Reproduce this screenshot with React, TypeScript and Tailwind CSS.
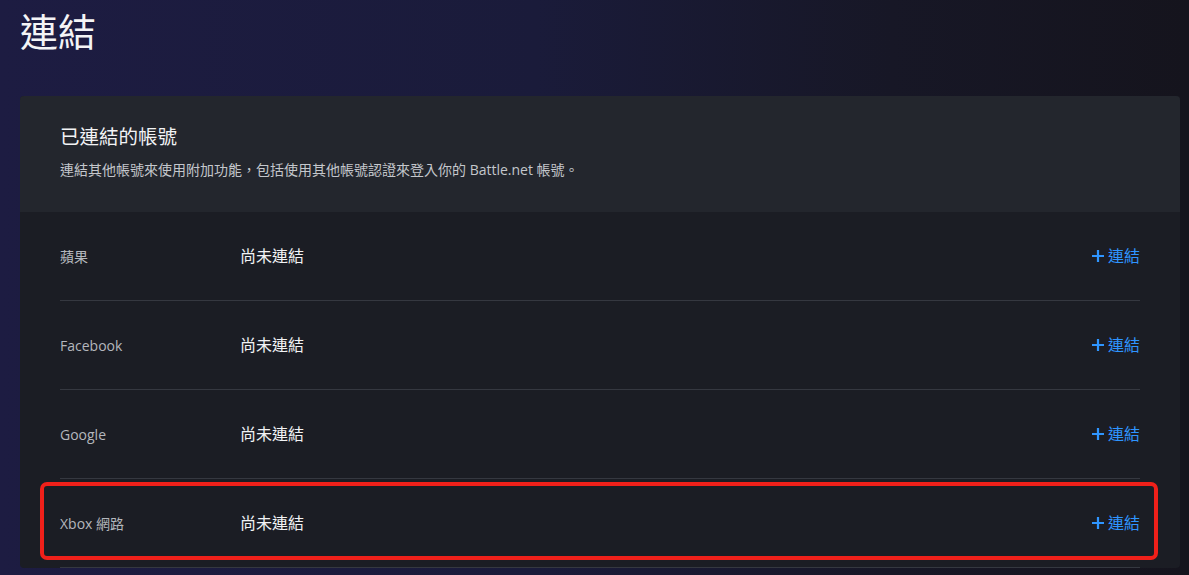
import React from "react";

const rows = ["蘋果", "Facebook", "Google", "Xbox 網路"];

function Row({ label, highlight }: { label: string; highlight?: boolean }) {
  return (
    <div className="relative h-[89px] border-b border-[#353840] flex items-center">
      {highlight && (
        <div className="absolute left-[-20px] right-[-18px] top-[3px] bottom-[7px] border-[4px] border-[#f0201a] rounded-[7px] pointer-events-none" />
      )}
      <div className="w-[180px] text-[14px] text-[#b4b7bd]">{label}</div>
      <div className="flex-1 text-[16px] text-[#f2f3f5]">尚未連結</div>
      <div className="flex items-center gap-[3px] text-[16px] text-[#2f95ff]">
        <svg width="14" height="14" viewBox="0 0 14 14">
          <path d="M7 1v12M1 7h12" stroke="#2f95ff" strokeWidth="2.2" />
        </svg>
        <span>連結</span>
      </div>
    </div>
  );
}

export default function App() {
  return (
    <div
      className="w-[1189px] h-[575px] overflow-hidden bg-[linear-gradient(90deg,#1d1c42_0%,#1a1b3a_45%,#171726_75%,#15141d_100%)] text-white"
      style={{ fontFamily: '"Open Sans", "Noto Sans CJK TC", sans-serif' }}
    >
      <div className="px-[20px]">
        <h1 className="h-[96px] pt-[3px] text-[38px] leading-[56px] font-normal text-[#f4f4f6]">連結</h1>
        <div className="w-[1160px] rounded-[4px] bg-[#1b1d24] overflow-visible">
          <div className="h-[116px] bg-[#23262d] rounded-t-[4px] px-[40px] pt-[27px]">
            <div className="text-[19.5px] leading-[28px] text-[#f2f3f5]">已連結的帳號</div>
            <div className="mt-[9px] text-[14px] leading-[20px] text-[#c4c7cc]">
              連結其他帳號來使用附加功能，包括使用其他帳號認證來登入你的 Battle.net 帳號。
            </div>
          </div>
          <div className="px-[40px]">
            {rows.map((r, i) => (
              <Row key={r} label={r} highlight={i === 3} />
            ))}
          </div>
        </div>
      </div>
    </div>
  );
}
